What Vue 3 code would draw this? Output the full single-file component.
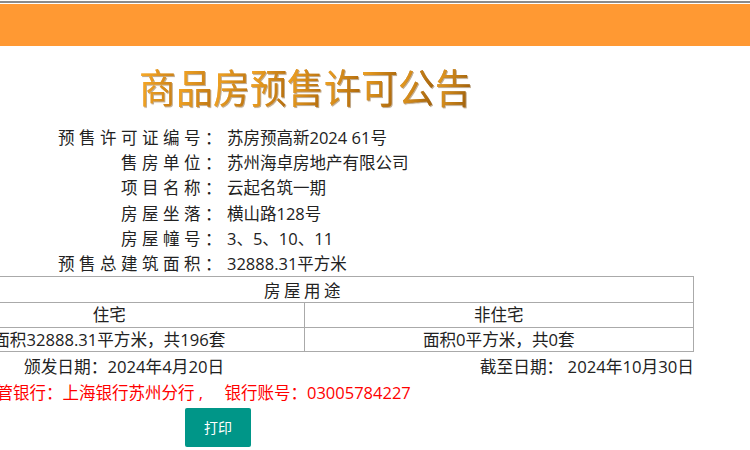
<script setup>
const colon = '\uFF1A'
const rows = [
  { label: '预售许可证编号' + colon, value: '苏房预高新2024 61号' },
  { label: '售房单位' + colon, value: '苏州海卓房地产有限公司' },
  { label: '项目名称' + colon, value: '云起名筑一期' },
  { label: '房屋坐落' + colon, value: '横山路128号' },
  { label: '房屋幢号' + colon, value: '3、5、10、11' },
  { label: '预售总建筑面积' + colon, value: '32888.31平方米' },
]
</script>

<template>
  <div class="page">
    <div class="topline"></div>
    <div class="band"></div>
    <h1 class="title">商品房预售许可公告</h1>
    <div class="info">
      <div v-for="r in rows" :key="r.label" class="info-row">
        <span class="label">{{ r.label }}</span>
        <span class="value">{{ r.value }}</span>
      </div>
    </div>
    <div class="sheet">
      <table class="usage">
        <tbody>
          <tr class="r1"><td colspan="2" class="spaced">房屋用途</td></tr>
          <tr class="r2"><td>住宅</td><td>非住宅</td></tr>
          <tr class="r3"><td>面积32888.31平方米&#xFF0C;共196套</td><td>面积0平方米&#xFF0C;共0套</td></tr>
        </tbody>
      </table>
      <div class="dates">
        <span class="issued">颁发日期&#xFF1A;2024年4月20日</span>
        <span>截至日期&#xFF1A; 2024年10月30日</span>
      </div>
      <div class="bank">监管银行&#xFF1A;上海银行苏州分行 , &nbsp;&nbsp;&nbsp;&nbsp;银行账号&#xFF1A;03005784227</div>
    </div>
    <div class="actions"><button class="print" type="button">打印</button></div>
  </div>
</template>

<style>
html, body { margin: 0; background: #fff; overflow: hidden; }
</style>

<style scoped>
.page {
  width: 750px;
  height: 450px;
  overflow: hidden;
  background: #fff;
  color: #222;
  font-family: "Open Sans", "Noto Sans CJK SC", sans-serif;
  font-size: 16.5px;
}
.topline { height: 2px; background: #8a8a8a; margin: 1px 0 1px; }
.band { height: 42px; background: #ff9933; }
.title {
  width: 333px;
  margin: 15px 0 0 139px;
  height: 63px;
  font-family: "Noto Sans CJK SC", sans-serif;
  font-size: 37px;
  line-height: 50px;
  font-weight: 400;
  white-space: nowrap;
  background-image: linear-gradient(100deg, rgba(255, 176, 40, .85) 0%, rgba(150, 85, 5, .45) 100%), linear-gradient(115deg, #f0a028 0%, #b87010 55%, #8a520a 100%);
  background-size: 37px 100%, 100% 100%;
  -webkit-background-clip: text;
  background-clip: text;
  color: transparent;
  filter: drop-shadow(1px 1px 0 rgba(120, 72, 8, .45));
  transform: scaleY(1.09);
}
.info { display: flex; flex-direction: column; margin-top: 1px; }
.info-row { display: flex; height: 25.2px; line-height: 25px; align-items: center; }
.label { width: 226px; text-align: right; letter-spacing: 4.5px; flex: none; white-space: nowrap; }
.value { margin-left: 1px; white-space: nowrap; }
.sheet { width: 780px; margin-left: -86px; }
.usage {
  width: 780px;
  border-collapse: collapse;
  table-layout: fixed;
}
.usage td {
  border: 1px solid #aaa;
  padding: 0;
  text-align: center;
  line-height: 22px;
}
.r1 td { height: 23px; padding-top: 2px; }
.r2 td { height: 24px; }
.r3 td { height: 23px; font-size: 16.6px; }
.spaced { letter-spacing: 3.5px; }
.dates {
  display: flex;
  justify-content: space-between;
  height: 28px;
  line-height: 29px;
  white-space: nowrap;
  font-size: 16.7px;
}
.issued { margin-left: 110px; }
.bank {
  color: #ff0000;
  margin-left: 66px;
  height: 25px;
  line-height: 25px;
  white-space: nowrap;
}
.actions { padding: 3px 0 0 185px; }
.print {
  display: block;
  width: 66px;
  height: 39px;
  border: none;
  border-radius: 2px;
  background: #009688;
  color: #fff;
  font-family: "Noto Sans CJK SC", sans-serif;
  font-size: 14px;
  padding: 0 0 2px;
}
</style>
